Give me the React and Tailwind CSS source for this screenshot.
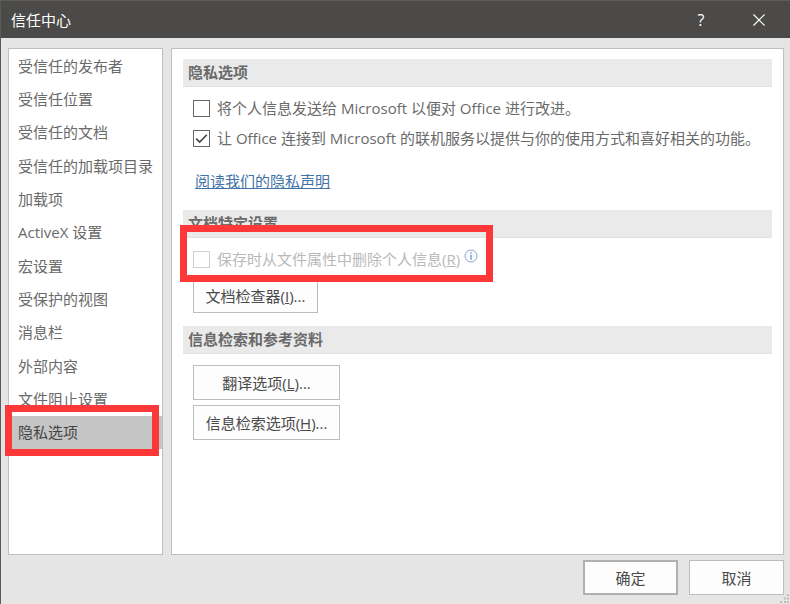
import { useState } from "react";

const categories = [
  "受信任的发布者",
  "受信任位置",
  "受信任的文档",
  "受信任的加载项目录",
  "加载项",
  "ActiveX 设置",
  "宏设置",
  "受保护的视图",
  "消息栏",
  "外部内容",
  "文件阻止设置",
  "隐私选项",
];

function Highlight({ className }) {
  return <span className={`pointer-events-none absolute border-[7px] border-[#fc3838] ${className}`} />;
}

function SectionTitle({ children }) {
  return (
    <h2 className="h-7 border-b border-[#e2e2e2] bg-[#eaeaea] px-[5px] leading-[26px] font-bold text-[#6a6a6a]">
      {children}
    </h2>
  );
}

function CheckOption({ checked, onChange, disabled, children }) {
  return (
    <label className={`flex h-[30px] items-center gap-[7px] ${disabled ? "text-[#b9b9b9]" : ""}`}>
      <span className="grid size-[17px] shrink-0">
        <input
          type="checkbox"
          checked={checked}
          onChange={onChange}
          disabled={disabled}
          className="col-start-1 row-start-1 size-[17px] appearance-none border border-[#666] bg-white disabled:border-[#cfcfcf]"
        />
        {checked && (
          <svg viewBox="0 0 17 17" className="pointer-events-none col-start-1 row-start-1 size-[17px]" fill="none" stroke="#444" strokeWidth="1.6">
            <path d="M3.2 8.6 6.7 12 13.8 4.8" />
          </svg>
        )}
      </span>
      <span>{children}</span>
    </label>
  );
}

function DialogButton({ className, children }) {
  return (
    <button type="button" className={`h-[35px] bg-[#fdfdfd] text-[#4a4a4a] hover:bg-[#f0f0f0] ${className}`}>
      {children}
    </button>
  );
}

export default function App() {
  const [selected, setSelected] = useState("隐私选项");
  const [sendInfo, setSendInfo] = useState(false);
  const [connect, setConnect] = useState(true);

  return (
    <div className="flex min-h-screen flex-col border-l border-[#5a5a5a] bg-[#e5e5e5] font-['Open_Sans','Noto_Sans_CJK_SC',sans-serif] text-[15px] leading-5 text-[#6a6a6a]">
      <header className="flex h-[38px] items-center border-t border-[#5c5c5a] bg-[#4b4a48] pl-[10px] text-white">
        <h1 className="grow">信任中心</h1>
        <button type="button" aria-label="帮助" className="flex h-full w-[54px] items-center justify-center text-base">
          ?
        </button>
        <button type="button" aria-label="关闭" className="flex h-full w-[62px] items-center justify-center">
          <svg viewBox="0 0 12 12" className="size-3" fill="none" stroke="currentColor" strokeWidth="1.2">
            <path d="M.5.5l11 11M11.5.5l-11 11" />
          </svg>
        </button>
      </header>

      <div className="flex grow gap-2 pt-[10px] pr-[6px] pl-[7px]">
        <nav className="w-[155px] shrink-0 border border-[#c0c0c0] bg-white">
          <ul className="grid h-[400px] grid-rows-12">
            {categories.map((name) => (
              <li key={name} className="relative">
                <button
                  type="button"
                  onClick={() => setSelected(name)}
                  className={`flex h-full w-full items-center pl-[9px] text-left whitespace-nowrap ${
                    selected === name ? "bg-[#c5c5c5] text-[#444]" : ""
                  }`}
                >
                  {name}
                </button>
                {name === "隐私选项" && <Highlight className="-top-[11px] right-[3px] -bottom-[7px] -left-1" />}
              </li>
            ))}
          </ul>
        </nav>

        <main className="grow border border-[#c0c0c0] bg-white px-[11px] pt-[10px]">
          <section>
            <SectionTitle>隐私选项</SectionTitle>
            <div className="px-[10px] pt-[6px] pb-[19px]">
              <CheckOption checked={sendInfo} onChange={(e) => setSendInfo(e.target.checked)}>
                将个人信息发送给 Microsoft 以便对 Office 进行改进。
              </CheckOption>
              <CheckOption checked={connect} onChange={(e) => setConnect(e.target.checked)}>
                让 Office 连接到 Microsoft 的联机服务以提供与你的使用方式和喜好相关的功能。
              </CheckOption>
              <p className="mt-[18px] pl-[2px]">
                <a href="#privacy" className="text-[#3f73a8] underline">
                  阅读我们的隐私声明
                </a>
              </p>
            </div>
          </section>

          <section>
            <SectionTitle>文档特定设置</SectionTitle>
            <div className="px-[10px] pt-[6px] pb-[13px]">
              <div className="relative flex w-[287px] gap-1">
                <CheckOption checked={false} disabled>
                  保存时从文件属性中删除个人信息(<u>R</u>)
                </CheckOption>
                <svg viewBox="0 0 14 14" className="mt-[5px] size-[14px] shrink-0" fill="none" stroke="#8ba6cf">
                  <circle cx="7" cy="7" r="6" fill="#f7faff" />
                  <path d="M7 3.2v1.4M7 5.8v5" stroke="#6f86ad" strokeWidth="1.2" />
                </svg>
                <Highlight className="-top-[19px] -right-[13px] -bottom-2 -left-[13px]" />
              </div>
              <DialogButton className="mt-1 w-[125px] border border-[#bdbdbd]">
                文档检查器(<u>I</u>)...
              </DialogButton>
            </div>
          </section>

          <section>
            <SectionTitle>信息检索和参考资料</SectionTitle>
            <div className="flex w-[167px] flex-col gap-[5px] px-[10px] pt-[11px]">
              <DialogButton className="border border-[#bdbdbd]">
                翻译选项(<u>L</u>)...
              </DialogButton>
              <DialogButton className="border border-[#bdbdbd]">
                信息检索选项(<u>H</u>)...
              </DialogButton>
            </div>
          </section>
        </main>
      </div>

      <footer className="relative flex h-[49px] items-start justify-end gap-[11px] pt-[5px] pr-[6px]">
        <DialogButton className="w-[95px] border-2 border-[#b0b0b0]">确定</DialogButton>
        <DialogButton className="w-[95px] border border-[#bdbdbd]">取消</DialogButton>
        <svg viewBox="0 0 10 10" className="absolute right-0 bottom-0 size-[10px]" fill="#bcbcbc">
          <path d="M7 0h2v2H7zM4 3.500h2v2H4zM7 3.500h2v2H7zM0 7h2v2H0zM4 7h2v2H4zM7 7h2v2H7z" />
        </svg>
      </footer>
    </div>
  );
}
